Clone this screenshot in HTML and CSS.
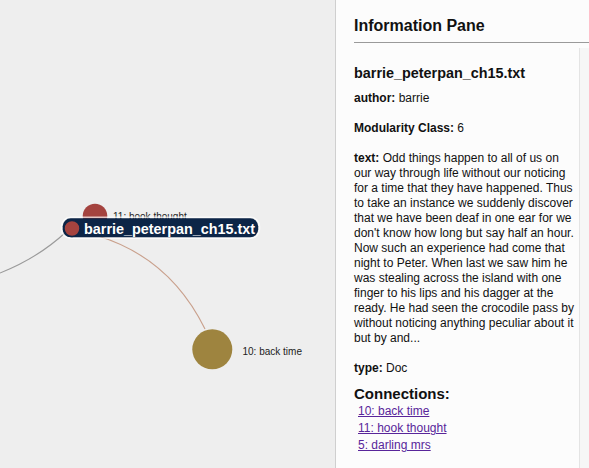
FILE: index.html
```html
<!DOCTYPE html>
<html>
<head>
<meta charset="utf-8">
<link rel="stylesheet" href="styles.css">
</head>
<body>
<div class="graph">
  <svg class="graph-svg" width="335" height="468" viewBox="0 0 335 468">
    <path class="edge edge-gray" d="M0 273 Q38 258 66 232"/>
    <path class="edge edge-brown" d="M98 236 Q170 258 205 329"/>
    <circle class="node node-red" cx="95" cy="216" r="12.3"/>
    <text class="node-label" x="113" y="219.5">11: hook thought</text>
    <circle class="node node-gold" cx="212.3" cy="349.3" r="20"/>
    <text class="node-label" x="242.5" y="354.5">10: back time</text>
    <g class="selected">
      <rect class="sel-glow" x="61.5" y="217.3" width="198" height="21" rx="9"/>
      <rect class="sel-box" x="62.7" y="218.3" width="195.5" height="19" rx="8"/>
      <circle class="sel-node" cx="72" cy="228.5" r="8"/>
      <text class="sel-label" x="84" y="233.5">barrie_peterpan_ch15.txt</text>
    </g>
  </svg>
</div>
<div class="pane">
  <div class="pane-header">
    <h2 class="pane-title">Information Pane</h2>
    <div class="pane-rule"></div>
  </div>
  <div class="pane-body">
    <div class="pane-content">
      <h3 class="doc-title">barrie_peterpan_ch15.txt</h3>
      <p class="attr"><b>author:</b> barrie</p>
      <p class="attr"><b>Modularity Class:</b> 6</p>
      <p class="attr"><b>text:</b> Odd things happen to all of us on our way through life without our noticing for a time that they have happened. Thus to take an instance we suddenly discover that we have been deaf in one ear for we don't know how long but say half an hour. Now such an experience had come that night to Peter. When last we saw him he was stealing across the island with one finger to his lips and his dagger at the ready. He had seen the crocodile pass by without noticing anything peculiar about it but by and...</p>
      <p class="attr"><b>type:</b> Doc</p>
      <h4 class="conn-title">Connections:</h4>
      <ul class="conn-list">
        <li><a class="conn-link" href="#">10: back time</a></li>
        <li><a class="conn-link" href="#">11: hook thought</a></li>
        <li><a class="conn-link" href="#">5: darling mrs</a></li>
      </ul>
    </div>
    <div class="scroll-track"></div>
  </div>
</div>
</body>
</html>
```
FILE: styles.css
```css
html, body {
  margin: 0;
  padding: 0;
}
body {
  display: flex;
  width: 589px;
  height: 468px;
  overflow: hidden;
  font-family: "Liberation Sans", Arial, sans-serif;
  color: #111;
}
.graph {
  width: 335px;
  flex: none;
  background: #eeeeee;
}
.graph-svg {
  display: block;
}
.edge {
  fill: none;
  stroke-width: 1.1;
}
.edge-gray { stroke: #9a9a9a; }
.edge-brown { stroke: #c9a08c; }
.node-red { fill: #a4433f; }
.node-gold { fill: #9e843f; }
.node-label {
  font-family: "Liberation Sans", Arial, sans-serif;
  font-size: 10px;
  fill: #222;
}
.sel-glow {
  fill: none;
  stroke: rgba(255,255,255,0.7);
  stroke-width: 1.5;
}
.sel-box { fill: #0c2547; }
.sel-node {
  fill: #a4433f;
  stroke: #0c2547;
  stroke-width: 1.5;
}
.sel-label {
  font-family: "Liberation Sans", Arial, sans-serif;
  font-size: 14.4px;
  font-weight: bold;
  fill: #ffffff;
}
.pane {
  flex: 1;
  display: flex;
  flex-direction: column;
  background: #fcfcfc;
  border-left: 1px solid #cfcfcf;
  min-width: 0;
}
.pane-header {
  padding: 16px 0 0 18px;
}
.pane-title {
  margin: 0;
  font-size: 16px;
  line-height: 20px;
  font-weight: bold;
  color: #111;
}
.pane-rule {
  margin-top: 6px;
  height: 1px;
  background: #9a9a9a;
}
.pane-body {
  flex: 1;
  display: flex;
  margin-top: 5px;
  min-height: 0;
}
.pane-content {
  flex: 1;
  padding: 16px 0 0 18px;
  overflow: hidden;
  min-width: 0;
}
.scroll-track {
  width: 9px;
  flex: none;
  background: #f6f6f6;
  border-left: 1px solid #e4e4e4;
}
.doc-title {
  margin: 0 0 9px;
  font-size: 14.4px;
  line-height: 18px;
  font-weight: bold;
}
.attr {
  margin: 0 0 15px;
  font-size: 12px;
  line-height: 15px;
}
.conn-title {
  margin: -6px 0 0;
  font-size: 15px;
  line-height: 18px;
  font-weight: bold;
}
.conn-list {
  list-style: none;
  margin: 0;
  padding: 0 0 0 4px;
}
.conn-list li {
  font-size: 12px;
  line-height: 17px;
}
.conn-link {
  color: #58259a;
  text-decoration: underline;
}
```
